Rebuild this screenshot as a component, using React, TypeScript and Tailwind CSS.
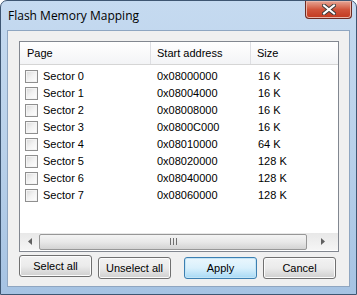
import React from 'react';

const sectors = [
    { name: 'Sector 0', addr: '0x08000000', size: '16 K' },
    { name: 'Sector 1', addr: '0x08004000', size: '16 K' },
    { name: 'Sector 2', addr: '0x08008000', size: '16 K' },
    { name: 'Sector 3', addr: '0x0800C000', size: '16 K' },
    { name: 'Sector 4', addr: '0x08010000', size: '64 K' },
    { name: 'Sector 5', addr: '0x08020000', size: '128 K' },
    { name: 'Sector 6', addr: '0x08040000', size: '128 K' },
    { name: 'Sector 7', addr: '0x08060000', size: '128 K' },
];

function Button({ label, active }: { label: string; active?: boolean }) {
    return (
        <button
            className={
                active
                    ? 'w-[73px] h-[22px] rounded-[3px] border border-[#3c7fb1] bg-gradient-to-b from-[#eaf6fd] via-[#d9f0fc] to-[#a7d9f5] text-[11px] text-black shadow-[inset_0_0_0_1px_#c4e5f6]'
                    : 'w-[73px] h-[22px] rounded-[3px] border border-[#707070] bg-gradient-to-b from-[#f2f2f2] via-[#ebebeb] to-[#cfcfcf] text-[11px] text-black shadow-[inset_0_0_0_1px_#fcfcfc]'
            }
        >
            {label}
        </button>
    );
}

function Checkbox() {
    return (
        <span className="w-[13px] h-[13px] border border-[#8f8f8f] bg-gradient-to-br from-[#d8d8d8] via-[#f2f2f2] to-[#ffffff] shadow-[inset_0_0_0_1px_#f4f4f4] shrink-0" />
    );
}

export default function App() {
    return (
        <div
            className="w-[357px] h-[295px] rounded-t-[7px] border border-[#3e5672] bg-gradient-to-b from-[#c5daf0] via-[#b9d1ea] to-[#a6c3e3] flex flex-col overflow-hidden"
            style={{ fontFamily: '"Liberation Sans", Arial, sans-serif' }}
        >
            <div className="h-[29px] flex items-start justify-between shrink-0">
                <span
                    className="pl-[7px] pt-[6px] text-[12px] text-black"
                    style={{ fontFamily: '"Open Sans", "Noto Sans", sans-serif' }}
                >
                    Flash Memory Mapping
                </span>
                <div className="mr-[4px] w-[47px] h-[18px] rounded-b-[4px] border border-t-0 border-[#6d2b23] bg-gradient-to-b from-[#e5a595] via-[#d0543b] to-[#c2381e] flex items-center justify-center shadow-[inset_0_0_0_1px_#eab5a8]">
                    <svg width="14" height="11" viewBox="0 0 14 11">
                        <path d="M2 1.5 L12 9.5 M12 1.5 L2 9.5" stroke="#3b3b3b" strokeWidth="4" strokeLinecap="square" />
                        <path d="M2 1.5 L12 9.5 M12 1.5 L2 9.5" stroke="#ffffff" strokeWidth="2" strokeLinecap="square" />
                    </svg>
                </div>
            </div>
            <div className="flex-1 mx-[6px] mb-[7px] border border-[#8fa6c1] bg-[#f0f0f0] pl-[11px] pt-[10px] flex flex-col">
                <div className="w-[320px] h-[211px] border border-[#828790] bg-white flex flex-col text-[11px] text-black">
                    <div className="h-[23px] flex bg-gradient-to-b from-white to-[#f3f4f6] border-b border-[#d5d5d5] shrink-0">
                        <div className="w-[131px] pl-[7px] flex items-center border-r border-[#dedfe3]">Page</div>
                        <div className="w-[100px] pl-[6px] flex items-center border-r border-[#dedfe3]">Start address</div>
                        <div className="flex-1 pl-[6px] flex items-center">Size</div>
                    </div>
                    <div className="pt-[3px] flex flex-col">
                        {sectors.map((s) => (
                            <div key={s.name} className="h-[17px] flex items-center">
                                <div className="w-[131px] pl-[5px] flex items-center gap-[5px]">
                                    <Checkbox />
                                    <span>{s.name}</span>
                                </div>
                                <div className="w-[100px] pl-[6px]">{s.addr}</div>
                                <div className="pl-[7px]">{s.size}</div>
                            </div>
                        ))}
                    </div>
                    <div className="flex-1" />
                    <div className="h-[17px] mb-[1px] flex items-center bg-gradient-to-b from-[#e8e8e8] to-[#f5f5f5] shrink-0">
                        <div className="w-[19px] flex justify-center">
                            <svg width="4" height="7" viewBox="0 0 4 7"><path d="M4 0 L0 3.5 L4 7 Z" fill="#606060" /></svg>
                        </div>
                        <div className="w-[268px] h-[16px] rounded-[2px] border border-[#979797] bg-gradient-to-b from-[#f4f4f4] via-[#e8e8e8] to-[#d3d3d3] flex items-center justify-center gap-[2px]">
                            <span className="w-[1px] h-[7px] bg-[#707070]" />
                            <span className="w-[1px] h-[7px] bg-[#707070]" />
                            <span className="w-[1px] h-[7px] bg-[#707070]" />
                        </div>
                        <div className="flex-1 flex justify-center">
                            <svg width="4" height="7" viewBox="0 0 4 7"><path d="M0 0 L4 3.5 L0 7 Z" fill="#606060" /></svg>
                        </div>
                    </div>
                </div>
                <div className="mt-[3px] flex">
                    <Button label="Select all" />
                    <div className="ml-[6px]"><Button label="Unselect all" /></div>
                    <div className="ml-[13px]"><Button label="Apply" active /></div>
                    <div className="ml-[6px]"><Button label="Cancel" /></div>
                </div>
            </div>
        </div>
    );
}
